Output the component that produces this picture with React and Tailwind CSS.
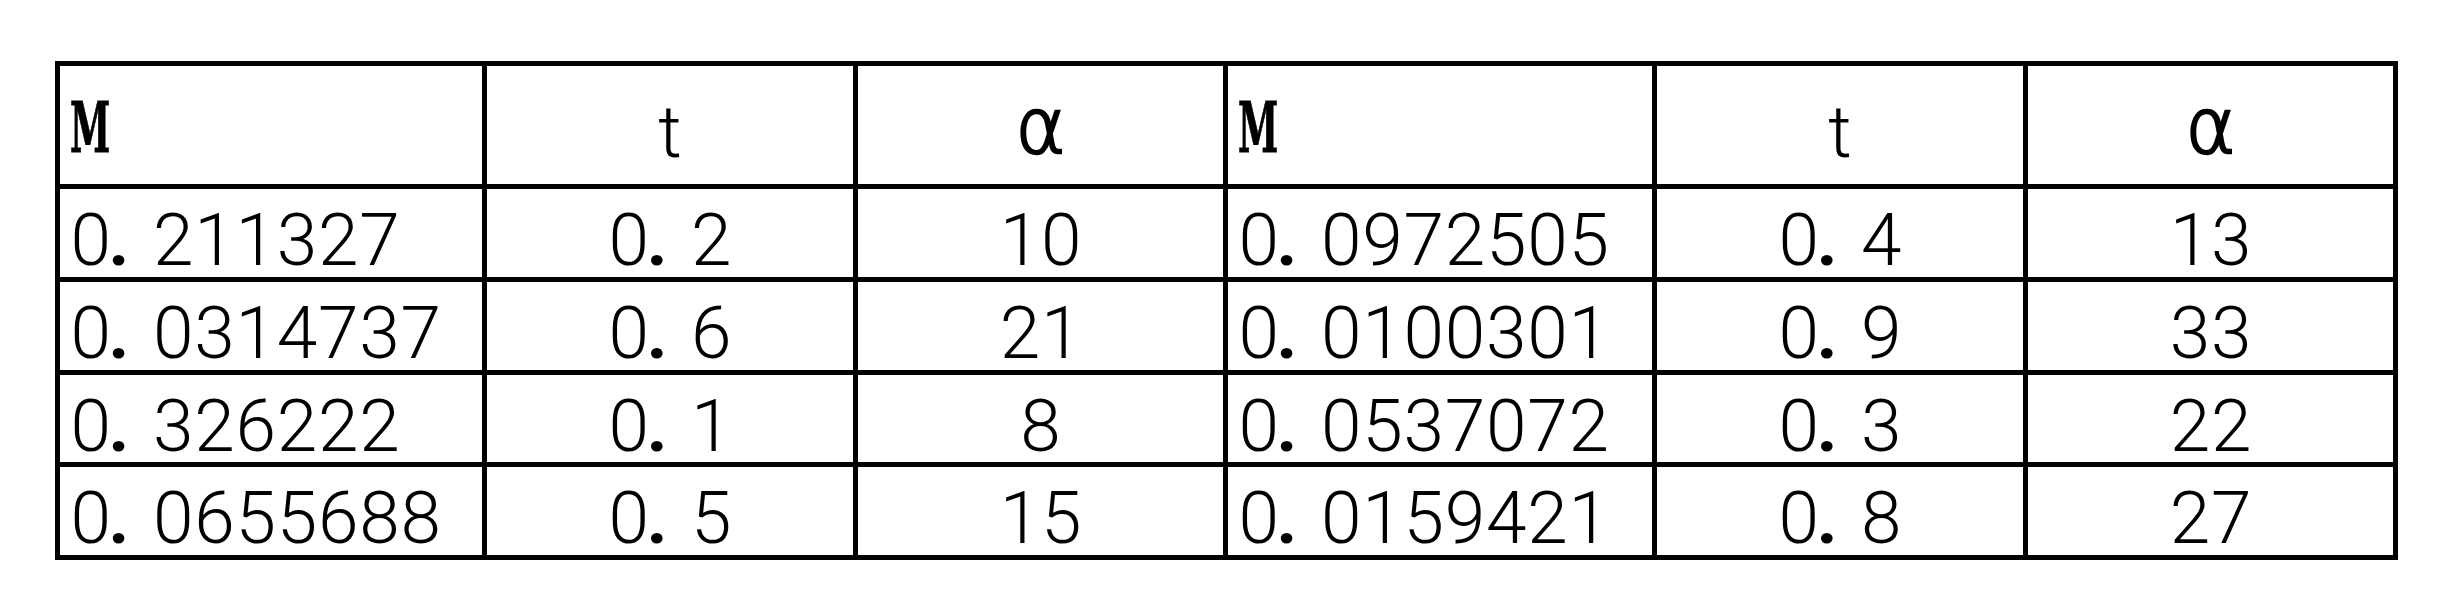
import React from "react";

const rows = [
  ["0.211327", "0.2", "10", "0.0972505", "0.4", "13"],
  ["0.0314737", "0.6", "21", "0.0100301", "0.9", "33"],
  ["0.326222", "0.1", "8", "0.0537072", "0.3", "22"],
  ["0.0655688", "0.5", "15", "0.0159421", "0.8", "27"],
];

// every glyph sits in its own fixed cell, like the half-width grid of the source font
function Cells({ text }) {
  return (
    <div className="flex">
      {text.split("").map((c, i) =>
        c === "." ? (
          <span key={i} className="inline-block w-[41.25px] -indent-[3px] text-left font-bold">
            .
          </span>
        ) : (
          <span key={i} className="inline-block w-[41.25px] text-center">
            {c}
          </span>
        )
      )}
    </div>
  );
}

function HeadM() {
  return (
    <div className="flex h-full items-center bg-white pl-[10px] pt-[5px]">
      <span className="inline-block origin-left scale-x-[0.52] font-['DejaVu_Serif','Liberation_Serif',serif] text-[70px] font-bold leading-none [-webkit-text-stroke:1px_black]">
        M
      </span>
    </div>
  );
}

function HeadT() {
  return (
    <div className="flex h-full items-center justify-center bg-white pt-[15px]">
      <span className="leading-none">t</span>
    </div>
  );
}

function HeadAlpha() {
  return (
    <div className="flex h-full items-center justify-center bg-white pt-[4px]">
      <span className="font-['DejaVu_Sans',sans-serif] text-[76px] font-extralight leading-none [-webkit-text-stroke:2.5px_black]">
        α
      </span>
    </div>
  );
}

export default function App() {
  return (
    <div className="min-h-screen bg-white pl-[55px] pt-[61px] font-['Roboto','Liberation_Sans',sans-serif] text-[73px] font-light text-black">
      <div className="grid w-fit grid-cols-[422px_366px_365px_424px_366px_365px] grid-rows-[118px_88px_88px_87px_88px] gap-[5px] bg-black p-[5px]">
        <HeadM />
        <HeadT />
        <HeadAlpha />
        <HeadM />
        <HeadT />
        <HeadAlpha />

        {rows.map((row, r) =>
          row.map((val, c) => (
            <div
              key={`${r}-${c}`}
              className={
                c % 3 === 0
                  ? "flex h-full items-center bg-white pl-[10px] pt-[15px] leading-none"
                  : "flex h-full items-center justify-center bg-white pt-[15px] leading-none"
              }
            >
              <Cells text={val} />
            </div>
          ))
        )}
      </div>
    </div>
  );
}
